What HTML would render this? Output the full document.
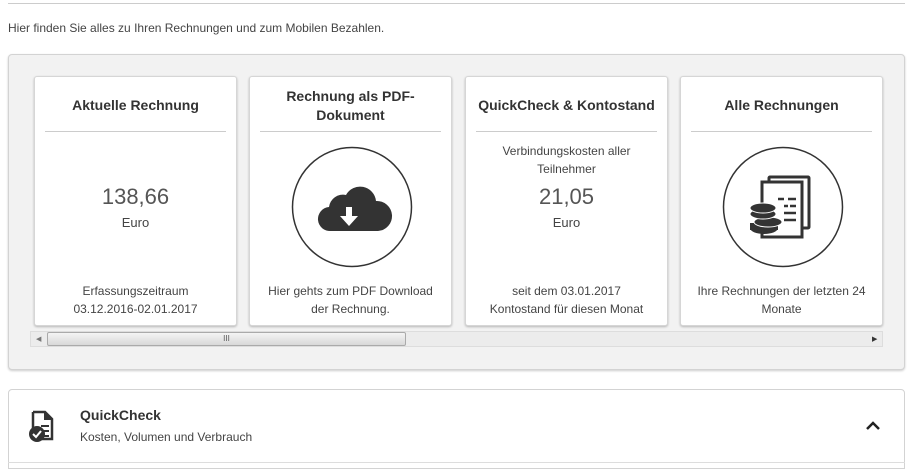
<!DOCTYPE html><html><head><style>
*{margin:0;padding:0;box-sizing:border-box}
body{width:909px;height:469px;background:#fff;font-family:"Liberation Sans",sans-serif;color:#333;position:relative;overflow:hidden}
.a{position:absolute}
.card{position:absolute;top:76px;width:203px;height:250px;background:#fff;border:1px solid #d6d6d6;border-radius:3px;box-shadow:0 1px 2px rgba(0,0,0,.25);text-align:center}
.card h3{position:absolute;left:0;right:0;font-size:14px;font-weight:bold;color:#333;line-height:19px}
.card .hr{position:absolute;left:10px;right:10px;top:54px;border-top:1px solid #ccc}
.t{position:absolute;left:0;right:0;font-size:12px;line-height:18px;color:#444}
.big{position:absolute;left:0;right:0;font-size:22px;color:#555;font-weight:300}
</style></head><body>
<div class="a" style="left:8px;top:3px;width:897px;border-top:1px solid #ccc"></div>
<div class="a" style="left:8px;top:21px;font-size:12px;color:#444">Hier finden Sie alles zu Ihren Rechnungen und zum Mobilen Bezahlen.</div>
<div class="a" style="left:8px;top:54px;width:897px;height:316px;background:#f2f2f2;border:1px solid #d3d3d3;border-radius:4px;box-shadow:0 1px 2px rgba(0,0,0,.2)"></div>

<div class="card" style="left:34px"><h3 style="top:19px">Aktuelle Rechnung</h3><div class="hr"></div>
<div class="big" style="top:107px">138,66</div><div class="t" style="top:137px;font-size:13px">Euro</div>
<div class="t" style="top:205px">Erfassungszeitraum<br>03.12.2016-02.01.2017</div></div>

<div class="card" style="left:249px"><h3 style="top:10px">Rechnung als PDF-<br>Dokument</h3><div class="hr"></div>
<svg class="a" style="left:41px;top:69px" width="122" height="122"><circle cx="61" cy="61" r="59.5" fill="none" stroke="#333" stroke-width="1.5"/>
<path d="M40 85 a12 12 0 0 1 -2 -24 a14 14 0 0 1 17 -12 a16 16 0 0 1 30 6 a12 12 0 0 1 2 30 z" fill="#333"/>
<path d="M55 61 h6 v9 h6 l-9 10 l-9 -10 h6 z" fill="#fff"/></svg>
<div class="t" style="top:205px">Hier gehts zum PDF Download<br>der Rechnung.</div></div>

<div class="card" style="left:465px"><h3 style="top:19px">QuickCheck &amp; Kontostand</h3><div class="hr"></div>
<div class="t" style="top:65px">Verbindungskosten aller<br>Teilnehmer</div>
<div class="big" style="top:107px">21,05</div><div class="t" style="top:137px;font-size:13px">Euro</div>
<div class="t" style="top:205px">seit dem 03.01.2017<br>Kontostand für diesen Monat</div></div>

<div class="card" style="left:680px"><h3 style="top:19px">Alle Rechnungen</h3><div class="hr"></div>
<svg class="a" style="left:41px;top:69px" width="122" height="122"><circle cx="61" cy="61" r="59.5" fill="none" stroke="#333" stroke-width="1.5"/>
<rect x="47" y="31" width="40" height="51" fill="none" stroke="#333" stroke-width="3" rx="1"/>
<rect x="40" y="36" width="40" height="55" fill="#fff" stroke="#333" stroke-width="3"/>
<path d="M56 53h6M66 53h8M62 60h4M68 60h6M62 67h12M62 74h12" stroke="#333" stroke-width="2.5"/>
<ellipse cx="42" cy="82" rx="14" ry="6" fill="#333"/><rect x="28" y="77" width="28" height="7" fill="#333"/>
<ellipse cx="46" cy="76" rx="14" ry="5" fill="#333" stroke="#fff" stroke-width="1"/>
<ellipse cx="41" cy="68" rx="13" ry="5" fill="#333" stroke="#fff" stroke-width="1"/>
<ellipse cx="41" cy="62" rx="13" ry="5" fill="#333" stroke="#fff" stroke-width="1"/></svg>
<div class="t" style="top:205px">Ihre Rechnungen der letzten 24<br>Monate</div></div>

<div class="a" style="left:30px;top:331px;width:853px;height:16px;background:#ececec;border:1px solid #ddd"></div>
<div class="a" style="left:36px;top:335px;font-size:7px;color:#777">◀</div>
<div class="a" style="left:47px;top:332px;width:359px;height:14px;background:linear-gradient(#f4f4f4,#d8d8d8);border:1px solid #aaa;border-radius:2px;font-size:8px;text-align:center;line-height:12px;color:#555">III</div>
<div class="a" style="left:872px;top:335px;font-size:7px;color:#333">▶</div>

<div class="a" style="left:8px;top:389px;width:897px;height:80px;background:#fff;border:1px solid #d3d3d3;border-radius:4px 4px 0 0"></div>
<div class="a" style="left:8px;top:462px;width:897px;border-top:1px solid #ddd"></div>
<svg class="a" style="left:27px;top:410px" width="32" height="34"><path d="M6 2h12l7 7v20h-13" fill="none" stroke="#333" stroke-width="2.5"/><path d="M6 2v16" stroke="#333" stroke-width="2.5"/><path d="M17 2v8h8" fill="#333"/><path d="M14 16h8M14 21h8M14 26h8" stroke="#333" stroke-width="2"/><circle cx="10" cy="24" r="8" fill="#333"/><path d="M6 24l3 3l5 -6" stroke="#fff" stroke-width="2" fill="none"/></svg>
<div class="a" style="left:80px;top:407px;font-size:14px;font-weight:bold">QuickCheck</div>
<div class="a" style="left:80px;top:430px;font-size:12px;color:#444">Kosten, Volumen und Verbrauch</div>
<svg class="a" style="left:865px;top:420px" width="16" height="12"><path d="M2 9l6 -6l6 6" fill="none" stroke="#222" stroke-width="2.5"/></svg>
</body></html>
